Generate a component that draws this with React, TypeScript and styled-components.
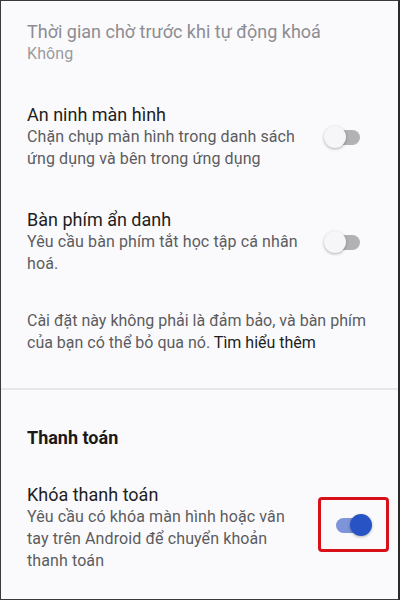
import React from "react";
import styled, { createGlobalStyle } from "styled-components";

const Global = createGlobalStyle`
  html, body { margin: 0; padding: 0; }
  body { font-family: Roboto, "Noto Sans", "Liberation Sans", sans-serif; background: #fafafc; }
  * { box-sizing: border-box; }
`;

const Frame = styled.div`
  width: 400px;
  height: 600px;
  overflow: hidden;
  background: #fafafc;
  border-top: 1px solid #3a3a3a;
  border-left: 1px solid #3a3a3a;
  border-bottom: 1px solid #3a3a3a;
  border-right: 2px solid #2a2a2a;
  padding-top: 1px;
  display: flex;
  flex-direction: column;
`;

const Row = styled.div`
  display: flex;
  align-items: center;
  padding: 18px 0 20px 26px;
`;

const TextCol = styled.div<{ $w?: number }>`
  width: ${(p) => (p.$w ? `${p.$w}px` : "auto")};
  display: flex;
  flex-direction: column;
`;

const Title = styled.div<{ $muted?: boolean }>`
  font-size: 18px;
  line-height: 23px;
  color: ${(p) => (p.$muted ? "#8d8d92" : "#1e1e1e")};
  white-space: nowrap;
`;

const Desc = styled.div<{ $muted?: boolean }>`
  font-size: 16px;
  line-height: 22px;
  letter-spacing: 0.1px;
  color: ${(p) => (p.$muted ? "#9a9a9e" : "#5c5c5f")};
`;

const SwitchSlot = styled.div<{ $mr: number; $mb?: number }>`
  margin-left: auto;
  margin-right: ${(p) => p.$mr}px;
  margin-bottom: ${(p) => p.$mb ?? 0}px;
  display: flex;
  align-items: center;
  justify-content: center;
`;

const Track = styled.div<{ $on?: boolean }>`
  position: relative;
  width: 36px;
  height: 22px;
  &::before {
    content: "";
    position: absolute;
    left: ${(p) => (p.$on ? 0 : 5)}px;
    right: ${(p) => (p.$on ? 5 : 0)}px;
    top: 4px;
    height: 15px;
    border-radius: 8px;
    background: ${(p) => (p.$on ? "#7d95d8" : "#b2b2b4")};
  }
`;

const Thumb = styled.div<{ $on?: boolean }>`
  position: absolute;
  top: 0;
  left: ${(p) => (p.$on ? 14 : 0)}px;
  width: 22px;
  height: 22px;
  border-radius: 50%;
  background: ${(p) => (p.$on ? "#2853c4" : "#f6f6f8")};
  box-shadow: 0 1px 3px rgba(0, 0, 0, 0.3);
`;

const Highlight = styled.div`
  border: 3px solid #d8101a;
  border-radius: 4px;
  width: 71px;
  height: 55px;
  display: flex;
  align-items: center;
  justify-content: center;
`;

const Info = styled.div`
  padding: 15px 26px 34px 26px;
  font-size: 16px;
  line-height: 22px;
  color: #5c5c5f;
`;

const Link = styled.span`
  color: #1e1e1e;
`;

const Divider = styled.div`
  height: 2px;
  background: #e7e7ea;
`;

const SectionHeader = styled.div`
  padding: 37px 26px 16px 26px;
  font-size: 18px;
  line-height: 22px;
  font-weight: 700;
  color: #1a1a1a;
`;

const Switch = ({ on }: { on?: boolean }) => (
  <Track $on={on}>
    <Thumb $on={on} />
  </Track>
);

export default function App() {
  return (
    <>
      <Global />
      <Frame>
        <Row>
          <TextCol>
            <Title $muted>Thời gian chờ trước khi tự động khoá</Title>
            <Desc $muted>Không</Desc>
          </TextCol>
        </Row>
        <Row>
          <TextCol $w={272}>
            <Title>An ninh màn hình</Title>
            <Desc>Chặn chụp màn hình trong danh sách ứng dụng và bên trong ứng dụng</Desc>
          </TextCol>
          <SwitchSlot $mr={38}>
            <Switch />
          </SwitchSlot>
        </Row>
        <Row>
          <TextCol $w={272}>
            <Title>Bàn phím ẩn danh</Title>
            <Desc>Yêu cầu bàn phím tắt học tập cá nhân hoá.</Desc>
          </TextCol>
          <SwitchSlot $mr={38}>
            <Switch />
          </SwitchSlot>
        </Row>
        <Info>
          Cài đặt này không phải là đảm bảo, và bàn phím của bạn có thể bỏ qua nó. <Link>Tìm hiểu thêm</Link>
        </Info>
        <Divider />
        <SectionHeader>Thanh toán</SectionHeader>
        <Row>
          <TextCol $w={272}>
            <Title>Khóa thanh toán</Title>
            <Desc>Yêu cầu có khóa màn hình hoặc vân tay trên Android để chuyển khoản thanh toán</Desc>
          </TextCol>
          <SwitchSlot $mr={9} $mb={6}>
            <Highlight>
              <Switch on />
            </Highlight>
          </SwitchSlot>
        </Row>
      </Frame>
    </>
  );
}
